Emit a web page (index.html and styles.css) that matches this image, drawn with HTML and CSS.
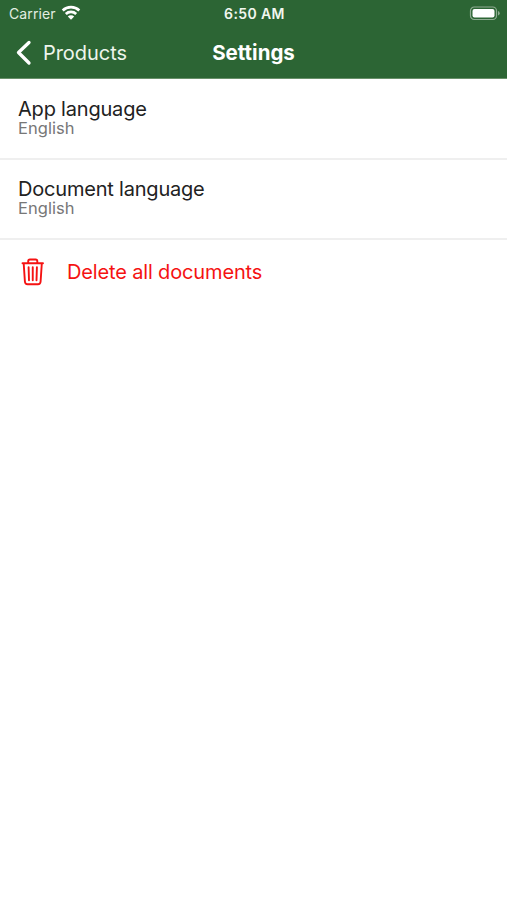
FILE: index.html
```html
<!DOCTYPE html>
<html lang="en">
<head>
<meta charset="utf-8">
<title>Settings</title>
<link rel="stylesheet" href="styles.css">
</head>
<body>
<header class="header">
  <div class="status">
    <div class="status-left">
      <span class="carrier">Carrier</span>
      <svg class="wifi" width="20" height="16" viewBox="0 0 20 16" fill="none" stroke="#fff" stroke-width="2.7">
        <path d="M1.700 5.500a12 12 0 0 1 16.600 0"/>
        <path d="M4.800 9a7.500 7.500 0 0 1 10.400 0"/>
        <path d="M10 14.800l-3.200-3.200a4.500 4.500 0 0 1 6.400 0z" fill="#fff" stroke="none"/>
      </svg>
    </div>
    <span class="time">6:50 AM</span>
    <svg class="battery" width="31" height="15" viewBox="0 0 31 15">
      <rect x="1.500" y="1" width="26" height="12.500" rx="3.700" fill="none" stroke="#8fac92" stroke-width="1.200"/>
      <rect x="3.500" y="3" width="22" height="8.500" rx="2" fill="#fff"/>
      <path d="M29 5v4.500q1.700-.6 1.700-2.250T29 5z" fill="#8fac92"/>
    </svg>
  </div>
  <nav class="nav">
    <a class="back">
      <svg width="18" height="26" viewBox="0 0 18 26" fill="none" stroke="#fff" stroke-width="3.300" stroke-linecap="round" stroke-linejoin="round"><path d="M14 2.500L3.500 12.500l10.500 10.500"/></svg>
      <span class="back-label">Products</span>
    </a>
    <h1 class="title">Settings</h1>
  </nav>
</header>
<main>
  <section class="row first">
    <div class="label">App language</div>
    <div class="value">English</div>
  </section>
  <section class="row">
    <div class="label">Document language</div>
    <div class="value">English</div>
  </section>
  <section class="delete">
    <svg width="24" height="28" viewBox="0 0 24 28" fill="none" stroke="#f51212" stroke-width="1.900" stroke-linecap="round" stroke-linejoin="round">
      <path d="M1.500 5.200h20.500M7.200 5V3.300q0-1.800 1.700-1.800h5.700q1.700 0 1.700 1.800V5M2.700 5.500l1.200 18q.2 2.800 2.700 2.800h10.300q2.500 0 2.700-2.800l1.200-18M7.600 9.200l.4 13M11.750 9.200v13M15.900 9.200l-.4 13"/>
    </svg>
    <span class="delete-label">Delete all documents</span>
  </section>
</main>
</body>
</html>
```
FILE: styles.css
```css
* { box-sizing: border-box; }
body {
  margin: 0;
  min-height: 900px;
  background: #fff;
  font-family: Inter, "Liberation Sans", sans-serif;
  white-space: nowrap;
}
.header {
  height: 79px;
  background: #2c6534;
  border-bottom: 1px solid #689069;
  color: #fff;
}
.status {
  height: 27px;
  display: grid;
  grid-template-columns: 1fr auto 1fr;
  align-items: center;
  padding: 0 7px 0 9px;
}
.status-left { display: flex; align-items: center; gap: 5px; }
.wifi { margin-top: -1px; }
.carrier { font-size: 14px; letter-spacing: 0.1px; color: #e3eee2; }
.time { font-size: 14px; font-weight: 600; letter-spacing: 0.4px; color: #f1f7ef; }
.battery { justify-self: end; }
.nav {
  height: 51px;
  display: grid;
  grid-template-columns: 1fr auto 1fr;
  align-items: center;
  padding: 0 15px;
}
.back { display: flex; align-items: center; gap: 10px; }
.back-label { font-size: 20px; letter-spacing: -0.05px; color: #eef5ec; }
.title { margin: 0; font-size: 20.5px; font-weight: 700; }
.row {
  height: 80px;
  padding: 18px 18px 0;
  border-bottom: 2px solid #efefef;
}
.first { height: 81px; padding-top: 19px; }
.label { font-size: 20px; line-height: 22px; letter-spacing: -0.2px; color: #222; }
.value { font-size: 16.5px; line-height: 17px; letter-spacing: 0.05px; color: #777; }
.delete {
  height: 63px;
  display: flex;
  align-items: center;
  gap: 22px;
  padding: 0 21px;
}
.delete-label { font-size: 20px; letter-spacing: -0.15px; color: #f51212; }
```
